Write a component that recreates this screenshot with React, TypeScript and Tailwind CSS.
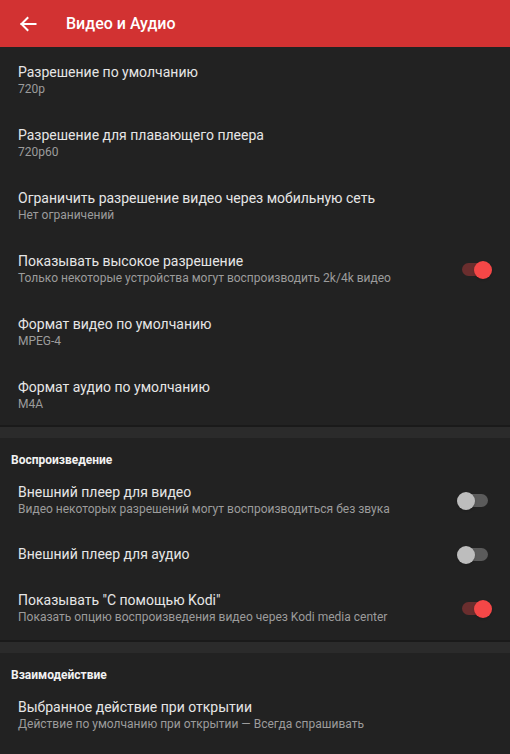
import React from 'react';

interface Item {
  title: string;
  summary?: string;
  toggle?: boolean;
}

const videoItems: Item[] = [
  { title: 'Разрешение по умолчанию', summary: '720p' },
  { title: 'Разрешение для плавающего плеера', summary: '720p60' },
  { title: 'Ограничить разрешение видео через мобильную сеть', summary: 'Нет ограничений' },
  { title: 'Показывать высокое разрешение', summary: 'Только некоторые устройства могут воспроизводить 2k/4k видео', toggle: true },
  { title: 'Формат видео по умолчанию', summary: 'MPEG-4' },
  { title: 'Формат аудио по умолчанию', summary: 'M4A' },
];

const playbackItems: Item[] = [
  { title: 'Внешний плеер для видео', summary: 'Видео некоторых разрешений могут воспроизводиться без звука', toggle: false },
  { title: 'Внешний плеер для аудио', toggle: false },
  { title: 'Показывать "С помощью Kodi"', summary: 'Показать опцию воспроизведения видео через Kodi media center', toggle: true },
];

const interactionItems: Item[] = [
  { title: 'Выбранное действие при открытии', summary: 'Действие по умолчанию при открытии — Всегда спрашивать' },
];

const Switch: React.FC<{ on: boolean }> = ({ on }) => (
  <div className="relative w-[30px] h-[20px] flex items-center shrink-0">
    <div className={`w-[26px] h-[13px] mx-auto rounded-full ${on ? 'bg-[#6a2e2e]' : 'bg-[#5b5b5b]'}`} />
    <div
      className={`absolute top-[1px] w-[18px] h-[18px] rounded-full shadow ${
        on ? 'right-[-2px] bg-[#f44747]' : 'left-[-3px] bg-[#bdbdbd]'
      }`}
    />
  </div>
);

const Row: React.FC<{ item: Item; shift?: boolean }> = ({ item, shift }) => (
  <div
    className={`flex items-center pl-[18px] pr-[20px] ${item.summary ? 'h-[63px]' : 'h-[45px]'} ${
      shift ? 'pt-[4px]' : ''
    }`}
  >
    <div className="flex-1 min-w-0">
      <div className="text-[14px] leading-[17px] text-[#e6e6e6]">{item.title}</div>
      {item.summary && (
        <div className="text-[12px] leading-[16px] text-[#9c9c9c]">{item.summary}</div>
      )}
    </div>
    {item.toggle !== undefined && <Switch on={item.toggle} />}
  </div>
);

const Divider = () => (
  <div className="h-[13px] bg-[#2b2b2b] border-t-2 border-[#1a1a1a]" />
);

const Category: React.FC<{ label: string }> = ({ label }) => (
  <div className="h-[31px] pl-[11px] pt-[15px] text-[12px] leading-[14px] font-bold text-[#f2f2f2]">
    {label}
  </div>
);

export default function App() {
  return (
    <div
      className="w-[510px] h-[754px] overflow-hidden bg-[#222222]"
      style={{ fontFamily: 'Roboto, "Noto Sans", sans-serif' }}
    >
      <div className="h-[47px] bg-[#d23232] flex items-center">
        <svg className="ml-[16px]" width="24" height="24" viewBox="0 0 24 24" fill="none" stroke="white" strokeWidth="2" strokeLinecap="square">
          <path d="M19.5 12H5.5" />
          <path d="M11.5 6L5.5 12L11.5 18" />
        </svg>
        <div className="ml-[26px] text-[16px] font-medium text-white">Видео и Аудио</div>
      </div>
      {videoItems.map((it) => (
        <Row key={it.title} item={it} shift />
      ))}
      <Divider />
      <Category label="Воспроизведение" />
      {playbackItems.map((it) => (
        <Row key={it.title} item={it} />
      ))}
      <Divider />
      <Category label="Взаимодействие" />
      {interactionItems.map((it) => (
        <Row key={it.title} item={it} />
      ))}
    </div>
  );
}
